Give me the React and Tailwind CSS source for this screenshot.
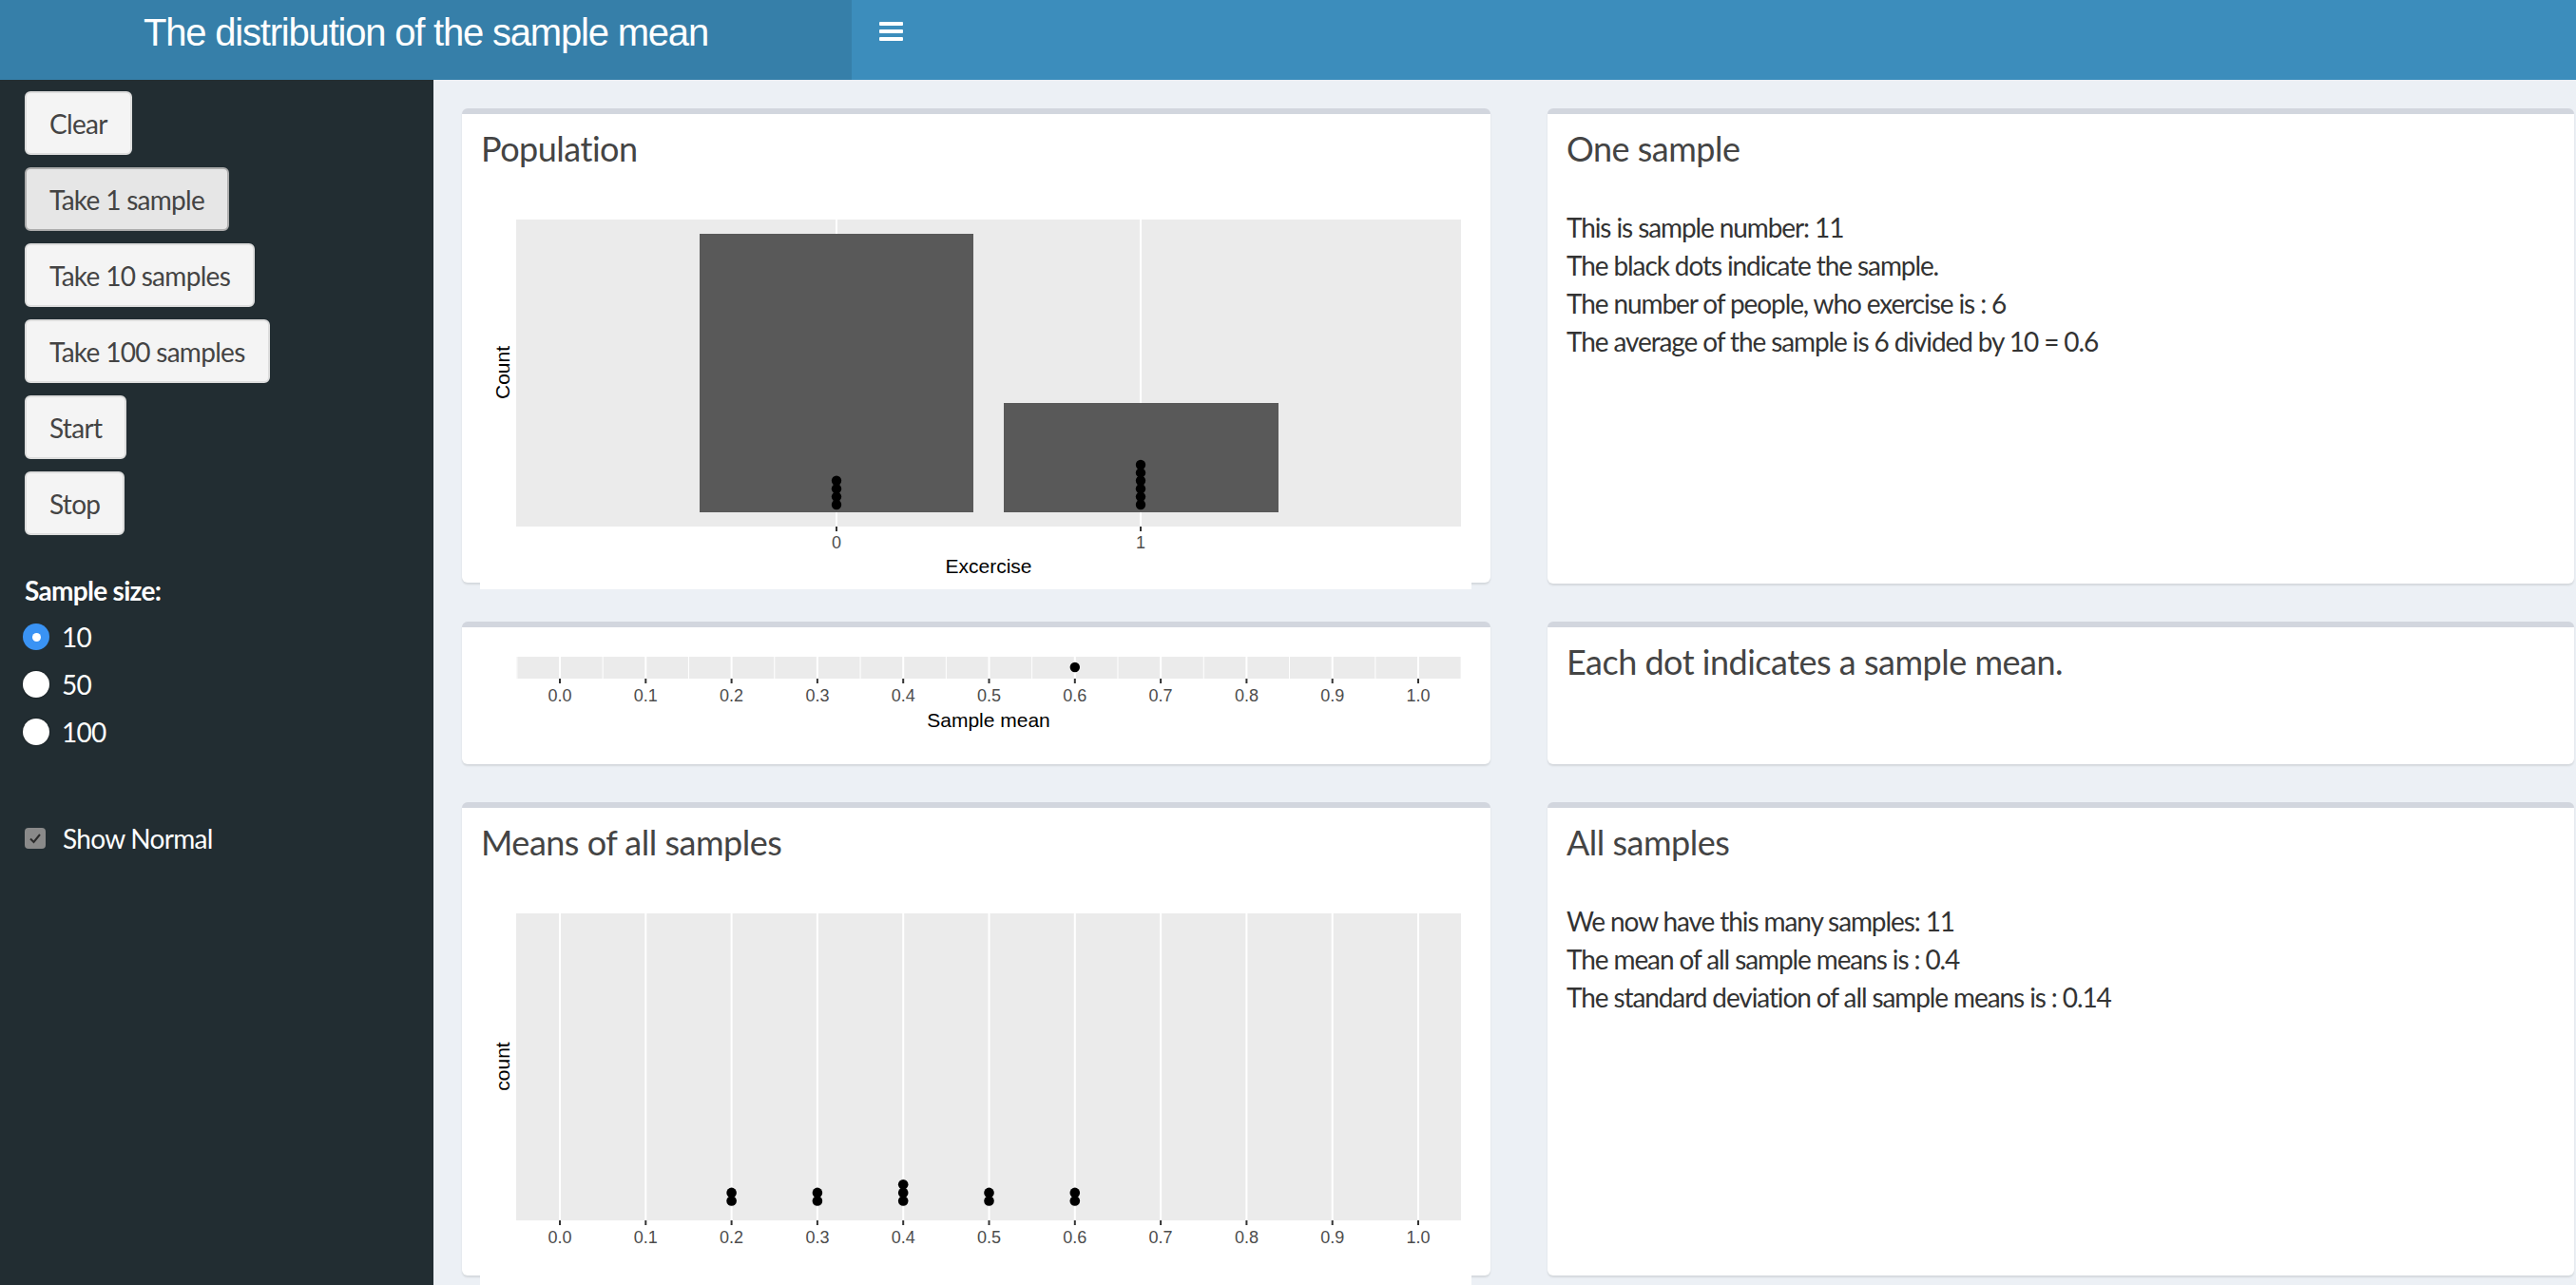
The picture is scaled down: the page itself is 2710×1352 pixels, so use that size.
import React from "react";

const ticks = [0, 0.1, 0.2, 0.3, 0.4, 0.5, 0.6, 0.7, 0.8, 0.9, 1.0];
const xOf = (v) => 589 + v * 903;
const plotFont = "Liberation Sans, Arial, sans-serif";

const sidebarButtons = [
  { label: "Clear" },
  { label: "Take 1 sample", active: true },
  { label: "Take 10 samples" },
  { label: "Take 100 samples" },
  { label: "Start" },
  { label: "Stop" },
];

const SidebarButton = ({ label, active }) => (
  <button
    className={
      active
        ? "h-[67px] rounded-[6px] border-2 border-[#adadad] bg-[#e6e6e6] px-[24px] text-[28px] leading-[40px] tracking-[-0.7px] text-[#444]"
        : "h-[67px] rounded-[6px] border-2 border-[#dddddd] bg-[#f4f4f4] px-[24px] text-[28px] leading-[40px] tracking-[-0.7px] text-[#444]"
    }
  >
    {label}
  </button>
);

const Radio = ({ label, checked }) => (
  <div className="flex h-[50px] items-center">
    {checked ? (
      <span className="ml-[-2px] flex h-[28px] w-[28px] items-center justify-center rounded-full bg-[#3a93f4]">
        <span className="h-[9px] w-[9px] rounded-full bg-white"></span>
      </span>
    ) : (
      <span className="ml-[-2px] h-[28px] w-[28px] rounded-full bg-white shadow-[0_0_2px_rgba(0,0,0,0.6)]"></span>
    )}
    <span className="ml-[13px] text-[28px] leading-[40px] tracking-[-0.7px] text-white">{label}</span>
  </div>
);

const Box = ({ children, className }) => (
  <div
    className={
      "rounded-[6px] border-t-[6px] border-[#d2d6de] bg-white shadow-[0_2px_2px_rgba(0,0,0,0.1)] " +
      (className || "")
    }
  >
    {children}
  </div>
);

const BoxTitle = ({ children }) => (
  <div className="h-[80px] px-[20px] pt-[18px] text-[36px] leading-[36px] tracking-[-0.5px] text-[#444]">
    {children}
  </div>
);

const XAxis = ({ y, labelY }) => (
  <g>
    {ticks.map((t) => (
      <g key={t}>
        <line x1={xOf(t)} x2={xOf(t)} y1={y} y2={y + 5} stroke="#333" strokeWidth="2" />
        <text
          x={xOf(t)}
          y={labelY}
          textAnchor="middle"
          fontSize="18"
          fill="#4d4d4d"
          fontFamily={plotFont}
        >
          {t.toFixed(1)}
        </text>
      </g>
    ))}
  </g>
);

const PopulationPlot = () => {
  const dots0 = [0, 1, 2, 3];
  const dots1 = [0, 1, 2, 3, 4, 5];
  return (
    <svg width="1043" height="420" viewBox="505 200 1043 420" className="ml-[19px] block bg-white">
      <rect x="543" y="231" width="994" height="323" fill="#ebebeb" />
      <line x1="880" x2="880" y1="231" y2="554" stroke="#fff" strokeWidth="2" />
      <line x1="1200" x2="1200" y1="231" y2="554" stroke="#fff" strokeWidth="2" />
      <rect x="736" y="246" width="288" height="293" fill="#595959" />
      <rect x="1056" y="424" width="289" height="115" fill="#595959" />
      {dots0.map((i) => (
        <circle key={i} cx="880" cy={531 - i * 8.4} r="5.2" fill="#000" />
      ))}
      {dots1.map((i) => (
        <circle key={i} cx="1200" cy={531 - i * 8.4} r="5.2" fill="#000" />
      ))}
      <line x1="880" x2="880" y1="554" y2="559" stroke="#333" strokeWidth="2" />
      <line x1="1200" x2="1200" y1="554" y2="559" stroke="#333" strokeWidth="2" />
      <text x="880" y="577" textAnchor="middle" fontSize="18" fill="#4d4d4d" fontFamily={plotFont}>0</text>
      <text x="1200" y="577" textAnchor="middle" fontSize="18" fill="#4d4d4d" fontFamily={plotFont}>1</text>
      <text x="1040" y="603" textAnchor="middle" fontSize="21" fill="#000" fontFamily={plotFont}>Excercise</text>
      <text
        x="536"
        y="392"
        textAnchor="middle"
        fontSize="21"
        fill="#000"
        fontFamily={plotFont}
        transform="rotate(-90 536 392)"
      >
        Count
      </text>
    </svg>
  );
};

const StripPlot = () => {
  const minors = [-0.05, 0.05, 0.15, 0.25, 0.35, 0.45, 0.55, 0.65, 0.75, 0.85, 0.95, 1.05];
  return (
    <svg width="1043" height="140" viewBox="505 660 1043 140" className="ml-[19px] block">
      <rect x="543" y="691" width="994" height="23" fill="#ebebeb" />
      {minors.map((m) => (
        <line key={m} x1={xOf(m)} x2={xOf(m)} y1="691" y2="714" stroke="#fff" strokeWidth="1" />
      ))}
      {ticks.map((t) => (
        <line key={t} x1={xOf(t)} x2={xOf(t)} y1="691" y2="714" stroke="#fff" strokeWidth="2" />
      ))}
      <circle cx={xOf(0.6)} cy="702" r="5.2" fill="#000" />
      <XAxis y={714} labelY={738} />
      <text x="1040" y="765" textAnchor="middle" fontSize="21" fill="#000" fontFamily={plotFont}>
        Sample mean
      </text>
    </svg>
  );
};

const MeansPlot = () => {
  const stacks = [
    { v: 0.2, n: 2 },
    { v: 0.3, n: 2 },
    { v: 0.4, n: 3 },
    { v: 0.5, n: 2 },
    { v: 0.6, n: 2 },
  ];
  return (
    <svg width="1043" height="422" viewBox="505 930 1043 422" className="ml-[19px] block bg-white">
      <rect x="543" y="961" width="994" height="323" fill="#ebebeb" />
      {ticks.map((t) => (
        <line key={t} x1={xOf(t)} x2={xOf(t)} y1="961" y2="1284" stroke="#fff" strokeWidth="2" />
      ))}
      {stacks.map((s) =>
        Array.from({ length: s.n }).map((_, i) => (
          <circle key={s.v + "-" + i} cx={xOf(s.v)} cy={1263.5 - i * 8.6} r="5.3" fill="#000" />
        ))
      )}
      <XAxis y={1284} labelY={1308} />
      <text
        x="536"
        y="1122"
        textAnchor="middle"
        fontSize="21"
        fill="#000"
        fontFamily={plotFont}
        transform="rotate(-90 536 1122)"
      >
        count
      </text>
    </svg>
  );
};

const App = () => {
  return (
    <div className="flex h-[1352px] w-[2710px] flex-col overflow-hidden bg-[#ecf0f5] font-['Lato',sans-serif]">
      {/* Header */}
      <header className="flex h-[84px] shrink-0">
        <div className="w-[896px] bg-[#367fa9] pt-[14px] text-center font-['Liberation_Sans',Arial,sans-serif] text-[40px] leading-[40px] font-light tracking-[-1.2px] text-white">
          The distribution of the sample mean
        </div>
        <div className="flex flex-1 bg-[#3c8dbc]">
          <div className="ml-[29px] mt-[23px] flex h-[20px] w-[25px] flex-col justify-between">
            <span className="h-[4px] rounded-[1px] bg-white"></span>
            <span className="h-[4px] rounded-[1px] bg-white"></span>
            <span className="h-[4px] rounded-[1px] bg-white"></span>
          </div>
        </div>
      </header>

      <div className="flex flex-1">
        {/* Sidebar */}
        <aside className="w-[456px] shrink-0 bg-[#222d32] pl-[26px] pt-[12px]">
          <div className="flex flex-col items-start gap-[13px]">
            {sidebarButtons.map((b) => (
              <SidebarButton key={b.label} label={b.label} active={b.active} />
            ))}
          </div>
          <div className="mt-[38px] text-[28px] leading-[40px] font-bold tracking-[-0.7px] text-white">
            Sample size:
          </div>
          <div className="mt-[4px]">
            <Radio label="10" checked />
            <Radio label="50" />
            <Radio label="100" />
          </div>
          <div className="mt-[67px] flex h-[40px] items-center">
            <span className="flex h-[22px] w-[22px] items-center justify-center rounded-[4px] bg-[#8a8a8a]">
              <svg width="16" height="16" viewBox="0 0 16 16">
                <path d="M3 8.5 L6.5 12 L13 4" fill="none" stroke="#2b2b2b" strokeWidth="2" />
              </svg>
            </span>
            <span className="ml-[18px] text-[28px] leading-[40px] tracking-[-0.7px] text-white">Show Normal</span>
          </div>
        </aside>

        {/* Main content */}
        <main className="grid grid-cols-[1082px_1080px] grid-rows-[500px_150px_498px] gap-x-[60px] gap-y-[40px] pl-[30px] pt-[30px]">
          <Box className="h-[499px]">
            <BoxTitle>Population</BoxTitle>
            <PopulationPlot />
          </Box>
          <Box className="h-[500px]">
            <BoxTitle>One sample</BoxTitle>
            <div className="px-[20px] pt-[19px] text-[28px] leading-[40px] tracking-[-1.1px] text-[#333]">
              <div>This is sample number: 11</div>
              <div>The black dots indicate the sample.</div>
              <div>The number of people, who exercise is : 6</div>
              <div>The average of the sample is 6 divided by 10 = 0.6</div>
            </div>
          </Box>

          <Box className="h-[150px]">
            <StripPlot />
          </Box>
          <Box className="h-[150px]">
            <BoxTitle>Each dot indicates a sample mean.</BoxTitle>
          </Box>

          <Box className="h-[498px]">
            <BoxTitle>Means of all samples</BoxTitle>
            <MeansPlot />
          </Box>
          <Box className="h-[498px]">
            <BoxTitle>All samples</BoxTitle>
            <div className="px-[20px] pt-[19px] text-[28px] leading-[40px] tracking-[-1.1px] text-[#333]">
              <div>We now have this many samples: 11</div>
              <div>The mean of all sample means is : 0.4</div>
              <div>The standard deviation of all sample means is : 0.14</div>
            </div>
          </Box>
        </main>
      </div>
    </div>
  );
};

export default App;
